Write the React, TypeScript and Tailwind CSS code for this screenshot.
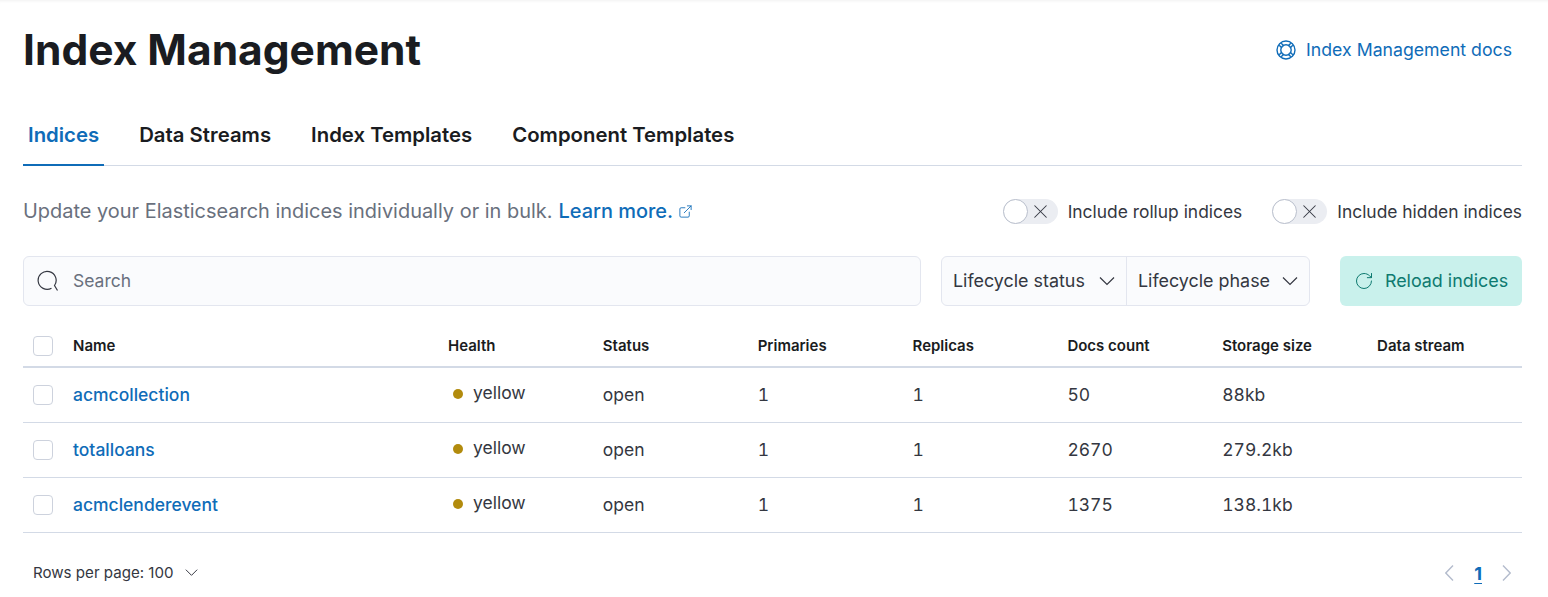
import { X, RotateCw, ExternalLink } from "lucide-react";

type IndexRow = {
    name: string;
    primaries: string;
    replicas: string;
    docs: string;
    size: string;
};

const rows: IndexRow[] = [
    { name: "acmcollection", primaries: "1", replicas: "1", docs: "50", size: "88kb" },
    { name: "totalloans", primaries: "1", replicas: "1", docs: "2670", size: "279.2kb" },
    { name: "acmclenderevent", primaries: "1", replicas: "1", docs: "1375", size: "138.1kb" },
];

const columns = ["Health", "Status", "Primaries", "Replicas", "Docs count", "Storage size", "Data stream"];

const gridCols = "grid grid-cols-[50px_375px_repeat(7,154.85px)] items-center";

const Checkbox = () => (
    <div className="ml-[10px] w-5 h-5 rounded-[4px] border border-[#cdd2dd] bg-white" />
);

const Toggle = ({ label }: { label: string }) => (
    <div className="flex items-center gap-[10px]">
        <div className="relative w-[55px] h-[25px] rounded-full bg-[#ebedf2]">
            <div className="absolute left-0 top-0 w-[25px] h-[25px] rounded-full bg-white border border-[#b9bfcc]" />
            <X className="absolute left-[26px] top-[1px] w-[23px] h-[23px] text-[#343741]" strokeWidth={1.1} />
        </div>
        <span className="text-[17.4px] text-[#343741]">{label}</span>
    </div>
);

const ChevronDownIcon = ({ className }: { className: string }) => (
    <svg className={className} viewBox="0 0 16 16" fill="none" stroke="currentColor" strokeWidth="1.2">
        <path d="M1 4.5 8 11.5 15 4.5" />
    </svg>
);

const DocsIcon = () => (
    <svg className="w-5 h-5" viewBox="0 0 20 20" fill="none" stroke="currentColor" strokeWidth="1.4">
        <circle cx="10" cy="10" r="9" />
        <circle cx="10" cy="10" r="5.2" />
        <path d="M3.2 5.2 6 8M5.2 3.2 8 6M14.8 3.2 12 6M16.8 5.2 14 8M3.2 14.8 6 12M5.2 16.8 8 14M14.8 16.8 12 14M16.8 14.8 14 12" />
    </svg>
);

const SearchIcon = () => (
    <svg className="w-[22px] h-[22px] text-[#343741]" viewBox="0 0 22 22" fill="none" stroke="currentColor" strokeWidth="1.2">
        <path d="M14.5 18.2A9 9 0 1 1 17.5 15.5L20.5 20.5" />
    </svg>
);

const App = () => {
    return (
        <div className="w-[1548px] h-[597px] overflow-hidden bg-white pl-[23px] pr-[26px] font-['Inter',sans-serif] shadow-[inset_0_3px_3px_-2px_rgba(0,0,0,0.06)]">
            <div className="flex items-center justify-between h-[100px]">
                <h1 className="text-[42.5px] leading-[50px] font-bold text-[#1a1c21]">Index Management</h1>
                <a className="flex items-center gap-[10px] pr-[10px] text-[17.7px] text-[#0f6cb8]">
                    <DocsIcon />
                    Index Management docs
                </a>
            </div>

            <div className="flex gap-[30px] h-[66px] border-b border-[#d3dae6]">
                <div className="px-[5px] pt-[7px] h-[66px] flex items-center text-[20.35px] font-semibold text-[#0f6cb8] border-b-2 border-[#0f6cb8]">Indices</div>
                <div className="px-[5px] pt-[5px] h-[65px] flex items-center text-[20.35px] font-semibold text-[#1a1c21]">Data Streams</div>
                <div className="px-[5px] pt-[5px] h-[65px] flex items-center text-[20.35px] font-semibold text-[#1a1c21]">Index Templates</div>
                <div className="px-[5px] pt-[5px] h-[65px] flex items-center text-[20.35px] font-semibold text-[#1a1c21]">Component Templates</div>
            </div>

            <div className="flex items-center justify-between h-[58px] mt-[17px]">
                <p className="flex items-center -mt-[1px] text-[19.95px] text-[#69707d]">
                    Update your Elasticsearch indices individually or in bulk.
                    <a className="ml-[6px] text-[#0f6cb8] font-medium">Learn more.</a>
                    <ExternalLink className="ml-[5px] w-[15px] h-[15px] text-[#0f6cb8]" strokeWidth={1.4} />
                </p>
                <div className="flex items-center gap-[30px]">
                    <Toggle label="Include rollup indices" />
                    <Toggle label="Include hidden indices" />
                </div>
            </div>

            <div className="flex items-center h-[50px] mt-[15px]">
                <div className="flex items-center w-[898px] h-[50px] rounded-[6px] border border-[#e3e6ef] bg-[#fafbfd] pl-[13px]">
                    <SearchIcon />
                    <span className="ml-[14px] text-[17.5px] text-[#69707d]">Search</span>
                </div>
                <div className="flex items-center ml-[20px] w-[369px] h-[50px] rounded-[6px] border border-[#e3e6ef] bg-[#fafbfd] text-[17.9px] text-[#343741]">
                    <div className="flex items-center justify-between w-[185px] h-full pl-[11px] pr-[11px] border-r border-[#e3e6ef]">
                        Lifecycle status
                        <ChevronDownIcon className="w-4 h-4" />
                    </div>
                    <div className="flex items-center justify-between flex-1 h-full pl-[11px] pr-[11px]">
                        Lifecycle phase
                        <ChevronDownIcon className="w-4 h-4" />
                    </div>
                </div>
                <button className="flex items-center justify-center gap-[11px] ml-[30px] w-[182px] h-[50px] rounded-[6px] bg-[#c9f1ec] text-[17.9px] text-[#0e7a70]">
                    <RotateCw className="w-5 h-5" strokeWidth={1.2} />
                    Reload indices
                </button>
            </div>

            <div className="mt-[20px] w-[1499px]">
                <div className={`${gridCols} h-[42px] border-b-2 border-[#d3dae6] text-[15px] font-semibold text-[#1a1c21]`}>
                    <Checkbox />
                    <span>Name</span>
                    {columns.map((col) => (
                        <span key={col}>{col}</span>
                    ))}
                </div>
                {rows.map((row) => (
                    <div key={row.name} className={`${gridCols} h-[55px] border-b border-[#d3dae6] text-[17.5px] text-[#343741] tabular-nums`}>
                        <Checkbox />
                        <a className="text-[#0f6cb8] font-medium">{row.name}</a>
                        <span className="flex items-center gap-[10px] pl-[5px] -mt-[3px]">
                            <span className="w-[10px] h-[10px] rounded-full bg-[#b28b0d]" />
                            yellow
                        </span>
                        <span>open</span>
                        <span>{row.primaries}</span>
                        <span>{row.replicas}</span>
                        <span>{row.docs}</span>
                        <span>{row.size}</span>
                        <span />
                    </div>
                ))}
            </div>

            <div className="flex items-center justify-between h-[80px] pl-[10px]">
                <div className="flex items-center gap-[11px] text-[15.1px] text-[#343741]">
                    Rows per page: 100
                    <ChevronDownIcon className="w-[13px] h-[13px]" />
                </div>
                <div className="flex items-center gap-[20px] pr-[11px] text-[#b4bccd]">
                    <svg className="w-[9px] h-4" viewBox="0 0 9 16" fill="none" stroke="currentColor" strokeWidth="1.4">
                        <path d="M8 .5.8 8 8 15.5" />
                    </svg>
                    <span className="text-[18px] font-bold text-[#0f6cb8] underline underline-offset-3">1</span>
                    <svg className="w-[9px] h-4" viewBox="0 0 9 16" fill="none" stroke="currentColor" strokeWidth="1.4">
                        <path d="M1 .5 8.2 8 1 15.5" />
                    </svg>
                </div>
            </div>
        </div>
    );
};

export default App;
